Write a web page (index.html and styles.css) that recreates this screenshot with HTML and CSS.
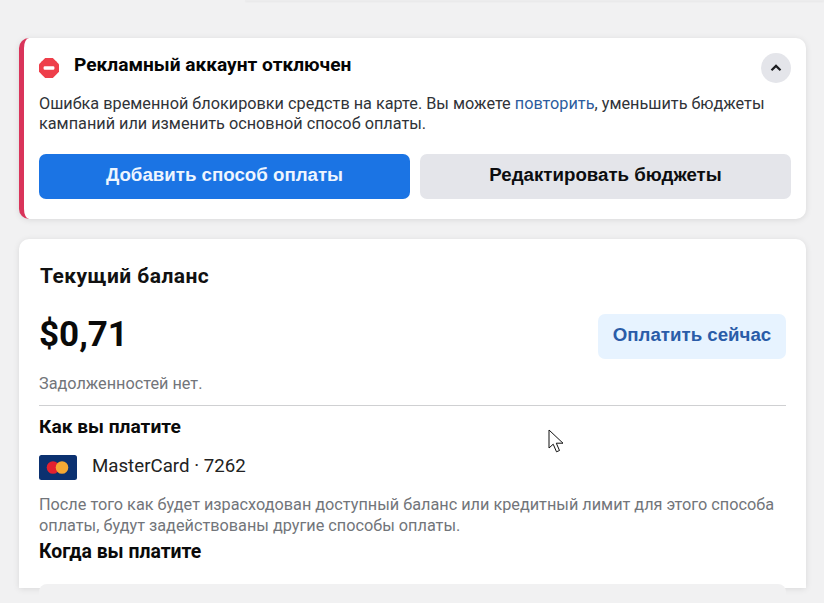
FILE: index.html
```html
<!DOCTYPE html>
<html lang="ru">
<head>
<meta charset="utf-8">
<title>Биллинг</title>
<link rel="stylesheet" href="styles.css">
</head>
<body>
<div class="topbar"></div>
<main class="page">
  <section class="card alert">
    <div class="alert-head">
      <svg class="stop" width="20" height="20" viewBox="0 0 20 20"><path fill="#ee3f4b" d="M6.200 0h7.600L20 6.200v7.600L13.800 20H6.200L0 13.800V6.200z"/><circle cx="10" cy="10" r="9.600" fill="#ee3f4b"/><rect x="4.600" y="8.300" width="10.800" height="3.400" rx="1.200" fill="#fff"/></svg>
      <h2 class="alert-title">Рекламный аккаунт отключен</h2>
      <button class="collapse" aria-label="Свернуть">
        <svg width="12" height="8" viewBox="0 0 12 8"><path d="M1.500 6.300 6 1.900l4.500 4.400" fill="none" stroke="#1c1e21" stroke-width="2.200"/></svg>
      </button>
    </div>
    <p class="alert-text">Ошибка временной блокировки средств на карте. Вы можете <a class="link" href="#">повторить</a>, уменьшить бюджеты кампаний или изменить основной способ оплаты.</p>
    <div class="alert-actions">
      <button class="btn btn-primary">Добавить способ оплаты</button>
      <button class="btn btn-secondary">Редактировать бюджеты</button>
    </div>
  </section>

  <section class="card balance">
    <h2 class="balance-title">Текущий баланс</h2>
    <div class="balance-row">
      <div class="amount">$0,71</div>
      <button class="btn btn-pay">Оплатить сейчас</button>
    </div>
    <p class="muted debt">Задолженностей нет.</p>
    <hr class="divider">
    <h3 class="section-title">Как вы платите</h3>
    <div class="method">
      <svg class="mc" width="38" height="25" viewBox="0 0 38 25"><rect width="38" height="25" rx="2.500" fill="#0b3170"/><circle cx="14" cy="12.500" r="6.300" fill="#e3212f"/><circle cx="23" cy="12.500" r="6.300" fill="#f4a934"/></svg>
      <span class="method-name">MasterCard · 7262</span>
    </div>
    <p class="muted note">После того как будет израсходован доступный баланс или кредитный лимит для этого способа оплаты, будут задействованы другие способы оплаты.</p>
    <h3 class="section-title when">Когда вы платите</h3>
    <div class="inner-box"></div>
  </section>
</main>
<svg class="cursor" width="17" height="25" viewBox="0 0 17 25"><path d="M1 1v18l4.200-3.800 3.300 7.600 3-1.300-3.200-7.300H15z" fill="#fff" stroke="#111" stroke-width="1"/></svg>
</body>
</html>
```

FILE: styles.css
```css
* { box-sizing: border-box; }
html, body { margin: 0; height: 603px; overflow: hidden; }
body {
  background: #f1f1f2;
  font-family: Roboto, "Liberation Sans", sans-serif;
  color: #1c1e21;
  position: relative;
}
.topbar {
  height: 1px;
  margin-left: 245px;
  background: #ececed;
  box-shadow: 0 1px 2px rgba(0,0,0,.06);
}
.page { padding: 37px 18px 0 19px; display: flex; flex-direction: column; gap: 20px; }
.card { background: #fff; border-radius: 10px; box-shadow: 0 1px 6px rgba(0,0,0,.10); }

.alert { height: 181px; border-left: 5px solid #d9345a; padding: 0 15px; }
.alert-head { display: flex; align-items: flex-start; height: 56px; padding-top: 15px; }
.stop { flex: none; margin-top: 5px; }
.alert-title { margin: 0 0 0 15px; font-size: 19.150px; line-height: 24px; font-weight: 700; color: #050505; flex: 1; }
.collapse {
  width: 30px; height: 30px; border: 0; border-radius: 50%; padding: 0;
  background: #e4e5ea; display: flex; align-items: center; justify-content: center;
}
.alert-text { margin: 0; font-size: 16.250px; line-height: 20px; color: #303338; height: 41px; }
.link { color: #2c5c9e; text-decoration: none; }
.alert-actions { display: flex; gap: 10px; margin-top: 19px; }
.btn {
  border: 0; border-radius: 7px; height: 45px; flex: 1; padding: 0 0 3px;
  font-family: "Liberation Sans", Arial, sans-serif; font-weight: 700; font-size: 18.700px;
}
.btn-primary { background: #1b74e4; color: #eef5ff; }
.btn-secondary { background: #e4e5ea; color: #0c0d0f; }

.balance { height: 349px; padding: 0 20px; border-radius: 10px 10px 0 0; }
.balance-title { margin: 0 0 0 1px; padding-top: 24px; font-size: 21px; line-height: 26px; font-weight: 700; color: #111; letter-spacing: .45px; }
.balance-row { display: flex; align-items: center; justify-content: space-between; margin-top: 25px; }
.amount { font-size: 35px; line-height: 41px; margin-bottom: 4px; font-weight: 700; color: #0a0a0a; }
.btn-pay { flex: none; width: 188px; background: #e7f3ff; color: #2a5ca8; }
.muted { color: #72757a; margin: 0; font-size: 16.250px; line-height: 21px; }
.debt { margin-top: 14px; }
.divider { border: 0; border-top: 1px solid #cfd0d2; margin: 11px 0 0; }
.section-title { margin: 0; font-size: 19.200px; line-height: 24px; font-weight: 700; color: #0a0a0a; }
.divider + .section-title { margin-top: 9px; }
.method { display: flex; align-items: center; gap: 15px; margin-top: 16px; }
.mc { flex: none; }
.method-name { font-size: 18.700px; line-height: 22px; padding-bottom: 3px; color: #222; }
.note { margin-top: 14px; }
.when { margin-top: 4px; font-size: 19.400px; }
.inner-box { height: 20px; margin-top: 20px; background: #f1f1f2; border-radius: 8px 8px 0 0; }

.cursor { position: absolute; left: 548px; top: 429px; }
```
